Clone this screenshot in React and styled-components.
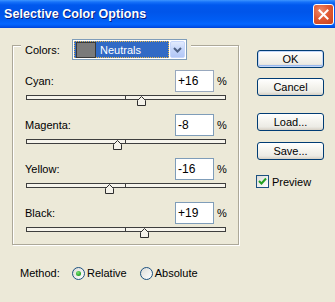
import React from 'react';
import styled, { createGlobalStyle } from 'styled-components';

const Global = createGlobalStyle`
  html, body { margin: 0; padding: 0; background: #ECE9D8; }
  body { font-family: "Liberation Sans", Arial, sans-serif; font-size: 11px; color: #000; }
  * { box-sizing: border-box; }
`;

const Window = styled.div`
  width: 335px;
  height: 302px;
  overflow: hidden;
  background: #ECE9D8;
  display: flex;
  flex-direction: column;
`;

const TitleBar = styled.div`
  height: 28px;
  flex: none;
  display: flex;
  align-items: center;
  justify-content: space-between;
  padding: 0 1px 0 4px;
  background: linear-gradient(to bottom,
    #3D95FF 0px, #1672FA 2px, #0058EE 5px, #0055EA 12px,
    #005DF4 20px, #0466FF 24px, #0058F0 26px, #0042D8 28px);
`;

const Title = styled.span`
  font-family: "Liberation Sans", Arial, sans-serif;
  font-weight: bold;
  font-size: 12.5px;
  color: #fff;
  text-shadow: 1px 1px 0 #0A1E80;
  letter-spacing: 0.05px;
`;

const CloseButton = styled.div`
  width: 21px;
  height: 21px;
  border: 1px solid #fff;
  border-radius: 3px;
  background: radial-gradient(circle at 35% 30%, #F08A6A 0%, #E05A34 45%, #C8401C 100%);
  display: flex;
  align-items: center;
  justify-content: center;
`;

const Body = styled.div`
  flex: 1;
  display: flex;
  flex-direction: column;
  padding: 17px 0 0 12px;
`;

const MainRow = styled.div`
  display: flex;
  align-items: flex-start;
`;

const Group = styled.div`
  width: 227px;
  height: 200px;
  flex: none;
  border: 1px solid #ACA899;
  box-shadow: inset 1px 1px 0 #fff, 1px 1px 0 #fff;
  display: flex;
  flex-direction: column;
`;

const Header = styled.div`
  margin: -7px 0 0 8px;
  align-self: flex-start;
  background: #ECE9D8;
  padding: 0 4px;
  display: flex;
  align-items: center;
  gap: 11px;
  height: 21px;
`;

const HeaderLabel = styled.span`
  width: 36px;
`;

const Dropdown = styled.div`
  width: 115px;
  height: 21px;
  border: 1px solid #7F9DB9;
  background: #fff;
  padding: 1px;
  display: flex;
`;

const Selection = styled.div`
  flex: 1;
  background: #316AC5;
  border: 1px dotted #E6B84A;
  display: flex;
  align-items: center;
  padding-left: 1px;
  gap: 4px;
  color: #fff;
`;

const Swatch = styled.div`
  width: 20px;
  height: 16px;
  background: ${p => p.$color};
  border: 1px solid #3A3A3A;
`;

const ArrowButton = styled.div`
  width: 15px;
  margin-left: 1px;
  border: 1px solid #C6D6FB;
  border-radius: 2px;
  background: linear-gradient(to bottom, #E2EBFE, #C4D5FA 50%, #B2C7F6);
  display: flex;
  align-items: center;
  justify-content: center;
`;

const Rows = styled.div`
  display: flex;
  flex-direction: column;
  gap: 14px;
  padding: 10px 12px 0 13px;
`;

const Row = styled.div`
  display: flex;
  flex-direction: column;
`;

const TopLine = styled.div`
  display: flex;
  align-items: center;
  height: 22px;
`;

const Label = styled.span`
  flex: 1;
  margin-left: -1px;
`;

const ValueBox = styled.div`
  width: 39px;
  height: 22px;
  border: 1px solid ${p => (p.$dim ? '#98A8BE' : '#7F9DB9')};
  background: #fff;
  display: flex;
  align-items: center;
  padding-left: 2px;
  font-size: 12px;
`;

const Percent = styled.span`
  width: 9px;
  margin-left: 3px;
`;

const Track = styled.div`
  position: relative;
  margin-top: 3px;
  height: 5px;
  border: 1px solid #3E3E3E;
  background: #F6F4EC;
`;

const CenterTick = styled.div`
  position: absolute;
  left: 98px;
  top: 0;
  bottom: 0;
  width: 1px;
  background: #3E3E3E;
`;

const ThumbShape = styled.svg`
  position: absolute;
  top: 0px;
  width: 9px;
  height: 10px;
  display: block;
`;

const Side = styled.div`
  margin-left: 18px;
  padding-top: 5px;
  display: flex;
  flex-direction: column;
`;

const Button = styled.div`
  width: 67px;
  height: 18px;
  margin-top: ${p => p.$mt || 0}px;
  border: 1px solid #003C74;
  border-radius: 3px;
  background: linear-gradient(to bottom, #FFFFFF 0%, #F6F5F0 40%, #ECEBE5 80%, #D6D0C5 100%);
  box-shadow: ${p => (p.$default ? 'inset 0 0 0 1px #C2D6F8, inset 0 -1px 0 1px #98B8EE' : 'none')};
  display: flex;
  align-items: center;
  justify-content: center;
`;

const CheckRow = styled.div`
  margin-top: 15px;
  margin-left: -1px;
  display: flex;
  align-items: center;
  gap: 3px;
`;

const CheckBox = styled.div`
  width: 13px;
  height: 13px;
  border: 1px solid #1C5180;
  background: linear-gradient(135deg, #DCDCD7, #FFFFFF);
  display: flex;
  align-items: center;
  justify-content: center;
`;

const MethodRow = styled.div`
  margin: 20px 0 0 8px;
  height: 16px;
  display: flex;
  align-items: center;
`;

const MethodLabel = styled.span`
  width: 42px;
  margin-right: 10px;
`;

const RadioItem = styled.div`
  display: flex;
  align-items: center;
  gap: 2px;
  margin-right: 13px;
`;

const RadioCircle = styled.div`
  width: 13px;
  height: 13px;
  border-radius: 50%;
  border: 1px solid #1C5180;
  background: linear-gradient(135deg, #DCDCD7, #FFFFFF);
  display: flex;
  align-items: center;
  justify-content: center;
`;

const RadioDot = styled.div`
  width: 5px;
  height: 5px;
  border-radius: 50%;
  background: radial-gradient(circle at 40% 35%, #7CE37A, #21A121 70%, #0E8A0E);
`;

const sliders = [
  { name: 'Cyan', value: 16, dim: true },
  { name: 'Magenta', value: -8 },
  { name: 'Yellow', value: -16 },
  { name: 'Black', value: 19 },
];

const fmt = v => (v > 0 ? `+${v}` : `${v}`);

function Slider({ value }) {
  const left = 98 + value * 0.99 - 4;
  return (
    <Track>
      <CenterTick />
      <ThumbShape viewBox="0 0 9 10" style={{ left: `${left}px` }}>
        <path d="M0.5 9.5 V4.5 L4.5 0.5 L8.5 4.5 V9.5 Z" fill="#F4F2EA" stroke="#2E2E2E" strokeWidth="1" />
      </ThumbShape>
    </Track>
  );
}

export default function App() {
  return (
    <>
      <Global />
      <Window>
        <TitleBar>
          <Title>Selective Color Options</Title>
          <CloseButton>
            <svg width="11" height="11" viewBox="0 0 11 11">
              <path d="M1.5 1.5 L9.5 9.5 M9.5 1.5 L1.5 9.5" stroke="#fff" strokeWidth="2" strokeLinecap="square" />
            </svg>
          </CloseButton>
        </TitleBar>
        <Body>
          <MainRow>
            <Group>
              <Header>
                <HeaderLabel>Colors:</HeaderLabel>
                <Dropdown>
                  <Selection>
                    <Swatch $color="#7A7A7A" />
                    <span>Neutrals</span>
                  </Selection>
                  <ArrowButton>
                    <svg width="9" height="6" viewBox="0 0 9 6">
                      <path d="M1 1 L4.5 4.5 L8 1" fill="none" stroke="#4D6185" strokeWidth="2" />
                    </svg>
                  </ArrowButton>
                </Dropdown>
              </Header>
              <Rows>
                {sliders.map(s => (
                  <Row key={s.name}>
                    <TopLine>
                      <Label>{s.name}:</Label>
                      <ValueBox $dim={s.dim}>{fmt(s.value)}</ValueBox>
                      <Percent>%</Percent>
                    </TopLine>
                    <Slider value={s.value} />
                  </Row>
                ))}
              </Rows>
            </Group>
            <Side>
              <Button $default>OK</Button>
              <Button $mt={10}>Cancel</Button>
              <Button $mt={17}>Load...</Button>
              <Button $mt={11}>Save...</Button>
              <CheckRow>
                <CheckBox>
                  <svg width="9" height="9" viewBox="0 0 9 9">
                    <path d="M1 4 L3.5 6.5 L8 1.5" fill="none" stroke="#21A121" strokeWidth="2" />
                  </svg>
                </CheckBox>
                <span>Preview</span>
              </CheckRow>
            </Side>
          </MainRow>
          <MethodRow>
            <MethodLabel>Method:</MethodLabel>
            <RadioItem>
              <RadioCircle><RadioDot /></RadioCircle>
              <span>Relative</span>
            </RadioItem>
            <RadioItem>
              <RadioCircle />
              <span>Absolute</span>
            </RadioItem>
          </MethodRow>
        </Body>
      </Window>
    </>
  );
}
